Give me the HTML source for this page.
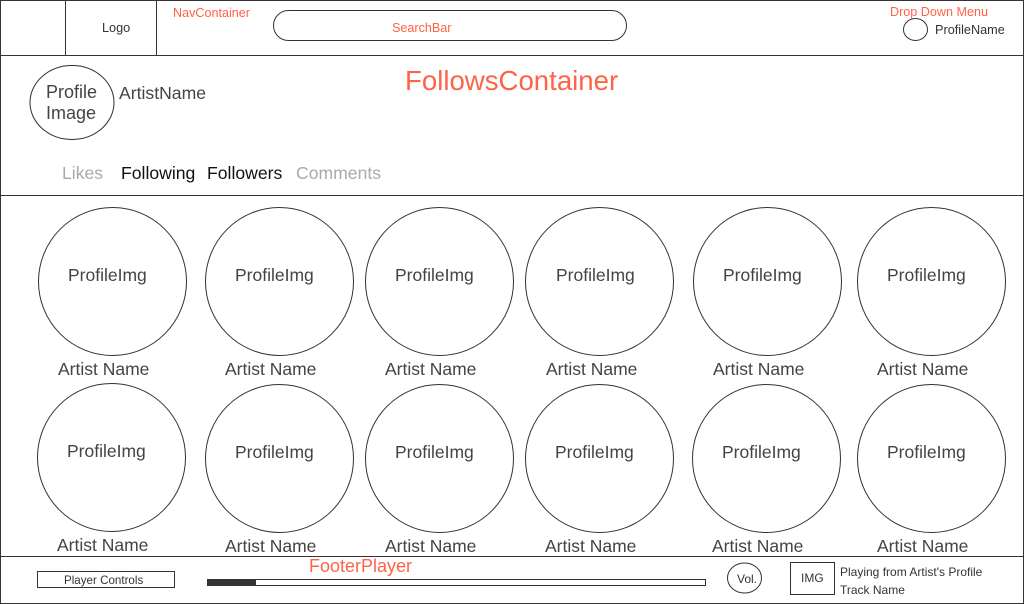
<html><head><style>body{margin:0;width:1024px;height:604px;overflow:hidden;background:#fff}svg{display:block}text{font-family:"Liberation Sans",sans-serif}</style></head><body>
<svg width="1024" height="604" viewBox="0 0 1024 604">
<g fill="none" stroke="#333" stroke-width="1">
<rect x="0.5" y="0.5" width="1023" height="603"/>
<line x1="0" y1="55.5" x2="1024" y2="55.5"/>
<line x1="0" y1="195.5" x2="1024" y2="195.5"/>
<line x1="0" y1="556.5" x2="1024" y2="556.5"/>
<line x1="65.5" y1="0" x2="65.5" y2="55"/>
<line x1="156.5" y1="0" x2="156.5" y2="55"/>
<rect x="273.5" y="10.5" width="353" height="30" rx="15"/>
<ellipse cx="915.5" cy="29.5" rx="12" ry="11"/>
<ellipse cx="72" cy="102.5" rx="42" ry="37"/>
<circle cx="112.5" cy="281.5" r="74"/><circle cx="279.5" cy="281.5" r="74"/><circle cx="439.5" cy="281.5" r="74"/><circle cx="599.5" cy="281.5" r="74"/><circle cx="767.5" cy="281.5" r="74"/><circle cx="931.5" cy="281.5" r="74"/>
<circle cx="111.5" cy="457.5" r="74"/><circle cx="279.5" cy="458.5" r="74"/><circle cx="439.5" cy="458.5" r="74"/><circle cx="599.5" cy="458.5" r="74"/><circle cx="766.5" cy="458.5" r="74"/><circle cx="931.5" cy="458.5" r="74"/>
<rect x="37.5" y="571.5" width="137" height="16"/>
<rect x="207.5" y="579.5" width="498" height="6"/>
<ellipse cx="744.5" cy="578" rx="17" ry="15"/>
<rect x="790.5" y="562.5" width="44" height="32"/>
</g>
<rect x="207" y="579" width="49" height="7" fill="#333"/>
<g fill="#333" font-size="12.7"><text x="102" y="32">Logo</text><text x="935" y="34">ProfileName</text></g>
<g fill="#ff6347" font-size="12.6"><text x="173" y="17">NavContainer</text><text x="392" y="32">SearchBar</text><text x="890" y="16">Drop Down Menu</text></g>
<text x="405" y="90" fill="#ff6347" font-size="27.6">FollowsContainer</text>
<text x="309" y="572" fill="#ff6347" font-size="18">FooterPlayer</text>
<g fill="#444" font-size="18"><text x="46" y="98">Profile</text><text x="46" y="119">Image</text><text x="119" y="99" font-size="17.6">ArtistName</text></g>
<g font-size="17.6"><text x="62" y="179" fill="#aaa">Likes</text><text x="121" y="179" fill="#111">Following</text><text x="207" y="179" fill="#111">Followers</text><text x="296" y="179" fill="#aaa">Comments</text></g>
<g fill="#444" font-size="17.5">
<text x="68" y="281">ProfileImg</text><text x="235" y="281">ProfileImg</text><text x="395" y="281">ProfileImg</text><text x="556" y="281">ProfileImg</text><text x="723" y="281">ProfileImg</text><text x="887" y="281">ProfileImg</text>
<text x="58" y="375">Artist Name</text><text x="225" y="375">Artist Name</text><text x="385" y="375">Artist Name</text><text x="546" y="375">Artist Name</text><text x="713" y="375">Artist Name</text><text x="877" y="375">Artist Name</text>
<text x="67" y="457">ProfileImg</text><text x="235" y="458">ProfileImg</text><text x="395" y="458">ProfileImg</text><text x="555" y="458">ProfileImg</text><text x="722" y="458">ProfileImg</text><text x="887" y="458">ProfileImg</text>
<text x="57" y="551">Artist Name</text><text x="225" y="552">Artist Name</text><text x="385" y="552">Artist Name</text><text x="545" y="552">Artist Name</text><text x="712" y="552">Artist Name</text><text x="877" y="552">Artist Name</text>
</g>
<g fill="#333" font-size="12"><text x="64" y="584" font-size="11.6">Player Controls</text><text x="737" y="583">Vol.</text><text x="801" y="582">IMG</text><text x="840" y="576">Playing from Artist's Profile</text><text x="840" y="594">Track Name</text></g>
</svg>
</body></html>
